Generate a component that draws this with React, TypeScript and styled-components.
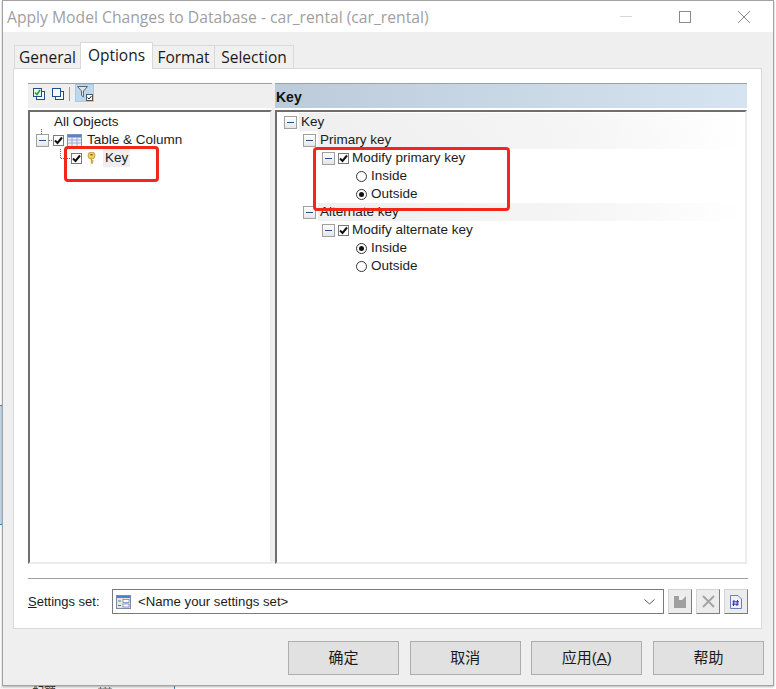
import React from "react";
import styled, { createGlobalStyle } from "styled-components";

const Global = createGlobalStyle`
  html, body { margin: 0; padding: 0; background: #fff; }
  * { box-sizing: border-box; }
`;

const UI_FONT = `"Open Sans", "Liberation Sans", "Noto Sans CJK SC", sans-serif`;
const TREE_FONT = `"Liberation Sans", "Noto Sans CJK SC", sans-serif`;

const Page = styled.div`
  position: relative;
  width: 776px;
  height: 689px;
  overflow: hidden;
  background: #fff;
  padding: 0 2px 3px 2px;
  font-family: ${TREE_FONT};
`;
const BackdropSliver = styled.div`
  position: absolute;
  left: 0;
  top: 405px;
  width: 2px;
  height: 120px;
  background: #c6d8ec;
  border-top: 1px solid #2f8fd0;
  border-bottom: 1px solid #2f8fd0;
`;
const BackdropEdge = styled.div`
  position: absolute;
  left: 0;
  bottom: 0;
  width: 175px;
  height: 3px;
  overflow: hidden;
  border-right: 1px solid #3d8fcb;
  background: #f6f6f6;
`;
const BackdropText = styled.span<{ $x: number }>`
  position: absolute;
  left: ${(p) => p.$x}px;
  top: -1px;
  font: 400 12px/14px ${TREE_FONT};
  color: #333;
`;
const Dialog = styled.div`
  position: relative;
  width: 100%;
  height: 100%;
  display: flex;
  flex-direction: column;
  background: #efefef;
  border: 1px solid #a3a3a3;
  box-shadow: 0 1px 2px rgba(0, 0, 0, 0.3);
`;
const TitleBar = styled.div`
  height: 31px;
  flex: none;
  background: #fff;
  display: flex;
  align-items: center;
  padding-left: 4px;
`;
const TitleText = styled.div`
  flex: 1;
  font: 400 15.7px/30px ${UI_FONT};
  color: #9f9f9f;
  white-space: nowrap;
`;
const WindowButton = styled.div`
  width: 59px;
  height: 31px;
  display: flex;
  align-items: center;
  justify-content: center;
`;
const Body = styled.div`
  flex: 1;
  display: flex;
  flex-direction: column;
  padding: 10px 10px 0 10px;
`;
const TabBar = styled.div`
  display: flex;
  align-items: flex-end;
  height: 27px;
  padding-left: 1px;
  position: relative;
  z-index: 1;
  margin-bottom: -1px;
`;
const Tab = styled.div<{ $active?: boolean; $w: number }>`
  height: ${(p) => (p.$active ? 27 : 24)}px;
  width: ${(p) => p.$w}px;
  background: ${(p) => (p.$active ? "#fff" : "#f0f0f0")};
  border: 1px solid #d9d9d9;
  border-bottom: ${(p) => (p.$active ? "none" : "1px solid #d9d9d9")};
  margin-right: -1px;
  font: 400 15.5px/${(p) => (p.$active ? 24 : 22)}px ${UI_FONT};
  color: #1a1a1a;
  text-align: center;
  white-space: nowrap;
  position: relative;
  z-index: ${(p) => (p.$active ? 2 : 1)};
`;
const Panel = styled.div`
  width: 749px;
  height: 561px;
  background: #fff;
  border: 1px solid #d9d9d9;
  padding: 14px 14px 0 14px;
  display: flex;
  flex-direction: column;
`;
const Split = styled.div`
  display: grid;
  grid-template-columns: 244px 3px 472px;
  height: 481px;
`;
const Column = styled.div`
  display: flex;
  flex-direction: column;
  min-width: 0;
`;
const Splitter = styled.div`
  background: #efefef;
`;
const Toolbar = styled.div`
  height: 25px;
  background: #efefef;
  border-top: 1px solid #a0a0a0;
  display: flex;
  align-items: flex-start;
  padding: 0 0 0 5px;
`;
const ToolIcon = styled.div`
  width: 12px;
  height: 14px;
  margin: 3px 7px 0 0;
  display: flex;
`;
const ToolSep = styled.div`
  width: 1px;
  height: 14px;
  margin: 3px 5px 0 -2px;
  background: #9a9a9a;
`;
const ToolToggle = styled.div`
  width: 19px;
  height: 18px;
  background: #b9d8f2;
  border: 1px solid #a6cbe8;
  display: flex;
  align-items: center;
  justify-content: center;
`;
const PaneHeader = styled.div`
  height: 25px;
  background: linear-gradient(90deg, #bccbda 0%, #d6e4f1 100%);
  border-top: 1px solid #a0a0a0;
  font: 700 14px/26px ${TREE_FONT};
  color: #111;
  padding-left: 1px;
`;
const TreeBox = styled.div`
  margin-top: 2px;
  padding-top: 1px;
  flex: 1;
  background: #fff;
  border-top: 2px solid #6e6e6e;
  border-left: 2px solid #6e6e6e;
  border-right: 2px solid #ececec;
  border-bottom: 2px solid #ececec;
  display: flex;
  flex-direction: column;
`;
const Row = styled.div<{ $indent: number }>`
  height: 18px;
  flex: none;
  display: flex;
  align-items: center;
  padding-left: ${(p) => p.$indent}px;
  font: 400 13.5px/18px ${TREE_FONT};
  color: #1c1c1c;
  white-space: nowrap;
`;
const Label = styled.span<{ $left?: number }>`
  margin-left: ${(p) => p.$left ?? 3}px;
`;
const ShadeLabel = styled.span`
  flex: 1;
  margin-left: 2px;
  padding-left: 2px;
  height: 18px;
  background: linear-gradient(90deg, #efefef 0%, #f5f5f5 60%, #fff 100%);
`;
const ChipLabel = styled.span`
  margin-left: 7px;
  padding: 0 2px;
  background: #efefef;
`;
const Expander = styled.span<{ $stem?: boolean }>`
  position: relative;
  width: 13px;
  height: 13px;
  flex: none;
  border: 1px solid #a0a0a0;
  background: linear-gradient(180deg, #fff, #e6e6e6);
  display: flex;
  align-items: center;
  justify-content: center;
  &::after {
    content: "";
    width: 7px;
    height: 1px;
    background: #24508f;
  }
  &::before {
    content: "";
    display: ${(p) => (p.$stem ? "block" : "none")};
    position: absolute;
    left: 4px;
    top: -6px;
    height: 5px;
    border-left: 1px dotted #666;
  }
`;
const Check = styled.span<{ $left?: number }>`
  width: 11px;
  height: 11px;
  flex: none;
  margin-left: ${(p) => p.$left ?? 3}px;
  border: 1px solid #7a7a7a;
  background: #fff;
  display: flex;
  align-items: center;
  justify-content: center;
`;
const Radio = styled.span<{ $on?: boolean }>`
  width: 11px;
  height: 11px;
  flex: none;
  border: 1px solid #333;
  border-radius: 50%;
  background: #fff;
  display: flex;
  align-items: center;
  justify-content: center;
  margin-right: 1px;
  &::after {
    content: "";
    width: 5px;
    height: 5px;
    border-radius: 50%;
    background: ${(p) => (p.$on ? "#111" : "transparent")};
  }
`;
const Rule = styled.div`
  height: 1px;
  background: #a0a0a0;
  margin-top: 14px;
  width: 720px;
`;
const SettingsRow = styled.div`
  display: flex;
  align-items: center;
  margin-top: 10px;
  height: 25px;
  width: 720px;
`;
const SettingsLabel = styled.div`
  width: 84px;
  flex: none;
  font: 400 13px/25px ${TREE_FONT};
  color: #1c1c1c;
  u { text-decoration: underline; }
`;
const Combo = styled.div`
  width: 552px;
  height: 25px;
  flex: none;
  border: 1px solid #7a7a7a;
  background: #fff;
  display: flex;
  align-items: center;
  padding: 0 8px 0 3px;
  font: 400 13.2px/23px ${TREE_FONT};
  color: #1c1c1c;
`;
const ComboText = styled.span`
  flex: 1;
  margin-left: 7px;
`;
const IconButton = styled.div`
  width: 24px;
  height: 25px;
  flex: none;
  margin-left: 4px;
  background: #ececec;
  border: 1px solid;
  border-color: #d4d4d4 #7c7c7c #7c7c7c #d4d4d4;
  display: flex;
  align-items: center;
  justify-content: center;
`;
const Footer = styled.div`
  flex: 1;
  display: flex;
  justify-content: flex-end;
  gap: 10.67px;
  padding: 12px 0 0 0;
  margin-right: -1px;
`;
const PushButton = styled.div`
  width: 111px;
  height: 34px;
  background: #e1e1e1;
  border: 1px solid #adadad;
  font: 400 15px/32px ${TREE_FONT};
  color: #1a1a1a;
  text-align: center;
  u { text-decoration: underline; }
`;
const Callout = styled.div<{ $x: number; $y: number; $w: number; $h: number }>`
  position: absolute;
  left: ${(p) => p.$x}px;
  top: ${(p) => p.$y}px;
  width: ${(p) => p.$w}px;
  height: ${(p) => p.$h}px;
  border: 3px solid #f4261c;
  border-radius: 4px;
  z-index: 5;
`;

const Tick = () => (
  <svg width="9" height="9" viewBox="0 0 9 9">
    <path d="M1 4.5 L3.5 7 L8 1.5" fill="none" stroke="#111" strokeWidth="2" />
  </svg>
);
const Stack = ({ checked }: { checked?: boolean }) => (
  <svg width="12" height="14" viewBox="0 0 12 14">
    <rect x="3.5" y="4.5" width="8" height="8" fill="#fff" stroke="#1f4f8f" />
    <rect x="0.5" y="1.5" width="8" height="8" fill={checked ? "#e9f5e9" : "#fff"} stroke="#1f4f8f" />
    {checked && <path d="M2 5.5 L4 7.5 L7 3" fill="none" stroke="#1c9a3c" strokeWidth="1.5" />}
  </svg>
);
const FunnelIcon = () => (
  <svg width="16" height="15" viewBox="0 0 16 15">
    <path d="M0.5 0.5 H10.5 L6.5 5 V11 L4.5 9.5 V5 Z" fill="#dfe3e8" stroke="#666" />
    <rect x="9.5" y="8.5" width="6" height="6" fill="#fff" stroke="#555" />
    <path d="M10.5 11.5 L12 13 L14.5 10" fill="none" stroke="#222" />
  </svg>
);
const TableIcon = () => (
  <svg width="15" height="13" viewBox="0 0 15 13" style={{ marginLeft: 3, flex: "none" }}>
    <rect x="0.5" y="0.5" width="14" height="12" fill="#eef2fa" stroke="#7f93c4" />
    <rect x="1" y="1" width="13" height="2.5" fill="#5d7fc8" />
    <path d="M5 3 V12 M10 3 V12 M1 6 H14 M1 9 H14" stroke="#9aaad2" />
  </svg>
);
const KeyIcon = () => (
  <svg width="9" height="12" viewBox="0 0 9 12" style={{ marginLeft: 5, flex: "none" }}>
    <circle cx="4.5" cy="3.5" r="3.5" fill="#f2cf63" stroke="#b8923a" strokeWidth="0.8" />
    <rect x="3.5" y="2" width="2" height="1.4" fill="#6b5a20" />
    <path d="M4.5 6.5 V11.5 M4.5 9 H6.5 M4.5 11 H6" stroke="#c9a23f" strokeWidth="1.4" />
  </svg>
);
const Dots = ({ d, w, h }: { d: string; w: number; h: number }) => (
  <svg width={w} height={h} viewBox={`0 0 ${w} ${h}`} style={{ flex: "none", display: "block" }}>
    <path d={d} fill="none" stroke="#666" strokeDasharray="1 1" />
  </svg>
);
const SetIcon = () => (
  <svg width="15" height="14" viewBox="0 0 15 14">
    <rect x="0.5" y="0.5" width="14" height="13" fill="#e9e6d8" stroke="#7d8aa8" />
    <rect x="1" y="1" width="13" height="2" fill="#4f7fd0" />
    <rect x="7" y="4.5" width="6" height="3" fill="#fff" stroke="#5a78b0" strokeWidth="0.7" />
    <rect x="7" y="9" width="6" height="3" fill="#fff" stroke="#5a78b0" strokeWidth="0.7" />
    <path d="M2 6 H5 M2 10.5 H5" stroke="#5a78b0" />
  </svg>
);
const Chevron = () => (
  <svg width="11" height="6" viewBox="0 0 11 6">
    <path d="M0.5 0.5 L5.5 5 L10.5 0.5" fill="none" stroke="#555" />
  </svg>
);
const SaveIcon = () => (
  <svg width="12" height="12" viewBox="0 0 12 12">
    <rect width="12" height="12" fill="#a0a0a0" />
    <path d="M5 0 H12 L8 4 H5 Z" fill="#efefef" />
  </svg>
);
const DeleteIcon = () => (
  <svg width="13" height="13" viewBox="0 0 13 13">
    <path d="M1 1 L12 12 M12 1 L1 12" stroke="#a4a4a4" strokeWidth="2" />
  </svg>
);
const ScriptIcon = () => (
  <svg width="12" height="14" viewBox="0 0 12 14">
    <path d="M0.5 0.5 H8 L11.5 4 V13.5 H0.5 Z" fill="#eef0fb" stroke="#6c7fb8" />
    <path d="M4 5 L3.4 11 M7.5 5 L6.9 11 M2.5 6.8 H9 M2.2 9.2 H8.7" stroke="#2a2fa8" />
  </svg>
);

export default function App() {
  return (
    <Page>
      <Global />
      <BackdropSliver />
      <BackdropEdge>
        <BackdropText $x={32}>配额</BackdropText>
        <BackdropText $x={98}>***</BackdropText>
      </BackdropEdge>
      <Dialog>
        <TitleBar>
          <TitleText>Apply Model Changes to Database - car_rental (car_rental)</TitleText>
          <WindowButton>
            <svg width="12" height="1"><rect width="12" height="1" fill="#d6d6d6" /></svg>
          </WindowButton>
          <WindowButton>
            <svg width="12" height="12"><rect x="0.5" y="0.5" width="11" height="11" fill="none" stroke="#8a8a8a" /></svg>
          </WindowButton>
          <WindowButton>
            <svg width="12" height="12"><path d="M0 0 L12 12 M12 0 L0 12" stroke="#8a8a8a" /></svg>
          </WindowButton>
        </TitleBar>
        <Body>
          <TabBar>
            <Tab $w={67}>General</Tab>
            <Tab $active $w={73}>Options</Tab>
            <Tab $w={63}>Format</Tab>
            <Tab $w={80}>Selection</Tab>
          </TabBar>
          <Panel>
            <Split>
              <Column>
                <Toolbar>
                  <ToolIcon><Stack checked /></ToolIcon>
                  <ToolIcon><Stack /></ToolIcon>
                  <ToolSep />
                  <ToolToggle><FunnelIcon /></ToolToggle>
                </Toolbar>
                <TreeBox>
                  <Row $indent={24}>All Objects</Row>
                  <Row $indent={6}>
                    <Expander $stem />
                    <Dots d="M0 9.5 H4" w={4} h={18} />
                    <Check $left={0}><Tick /></Check>
                    <TableIcon />
                    <Label $left={5}>Table &amp; Column</Label>
                  </Row>
                  <Row $indent={30}>
                    <Dots d="M0.5 0 V9.5 H11" w={11} h={18} />
                    <Check $left={0}><Tick /></Check>
                    <KeyIcon />
                    <ChipLabel>Key</ChipLabel>
                  </Row>
                </TreeBox>
              </Column>
              <Splitter />
              <Column>
                <PaneHeader>Key</PaneHeader>
                <TreeBox>
                  <Row $indent={7}><Expander /><ShadeLabel>Key</ShadeLabel></Row>
                  <Row $indent={26}><Expander /><ShadeLabel>Primary key</ShadeLabel></Row>
                  <Row $indent={45}>
                    <Expander />
                    <Check><Tick /></Check>
                    <Label>Modify primary key</Label>
                  </Row>
                  <Row $indent={79}><Radio /><Label>Inside</Label></Row>
                  <Row $indent={79}><Radio $on /><Label>Outside</Label></Row>
                  <Row $indent={26}><Expander /><ShadeLabel>Alternate key</ShadeLabel></Row>
                  <Row $indent={45}>
                    <Expander />
                    <Check><Tick /></Check>
                    <Label>Modify alternate key</Label>
                  </Row>
                  <Row $indent={79}><Radio $on /><Label>Inside</Label></Row>
                  <Row $indent={79}><Radio /><Label>Outside</Label></Row>
                </TreeBox>
              </Column>
            </Split>
            <Rule />
            <SettingsRow>
              <SettingsLabel><u>S</u>ettings set:</SettingsLabel>
              <Combo>
                <SetIcon />
                <ComboText>&lt;Name your settings set&gt;</ComboText>
                <Chevron />
              </Combo>
              <IconButton><SaveIcon /></IconButton>
              <IconButton><DeleteIcon /></IconButton>
              <IconButton><ScriptIcon /></IconButton>
            </SettingsRow>
          </Panel>
          <Footer>
            <PushButton>确定</PushButton>
            <PushButton>取消</PushButton>
            <PushButton>应用(<u>A</u>)</PushButton>
            <PushButton>帮助</PushButton>
          </Footer>
        </Body>
      </Dialog>
      <Callout $x={64} $y={146} $w={95} $h={36} />
      <Callout $x={313} $y={147} $w={197} $h={64} />
    </Page>
  );
}
